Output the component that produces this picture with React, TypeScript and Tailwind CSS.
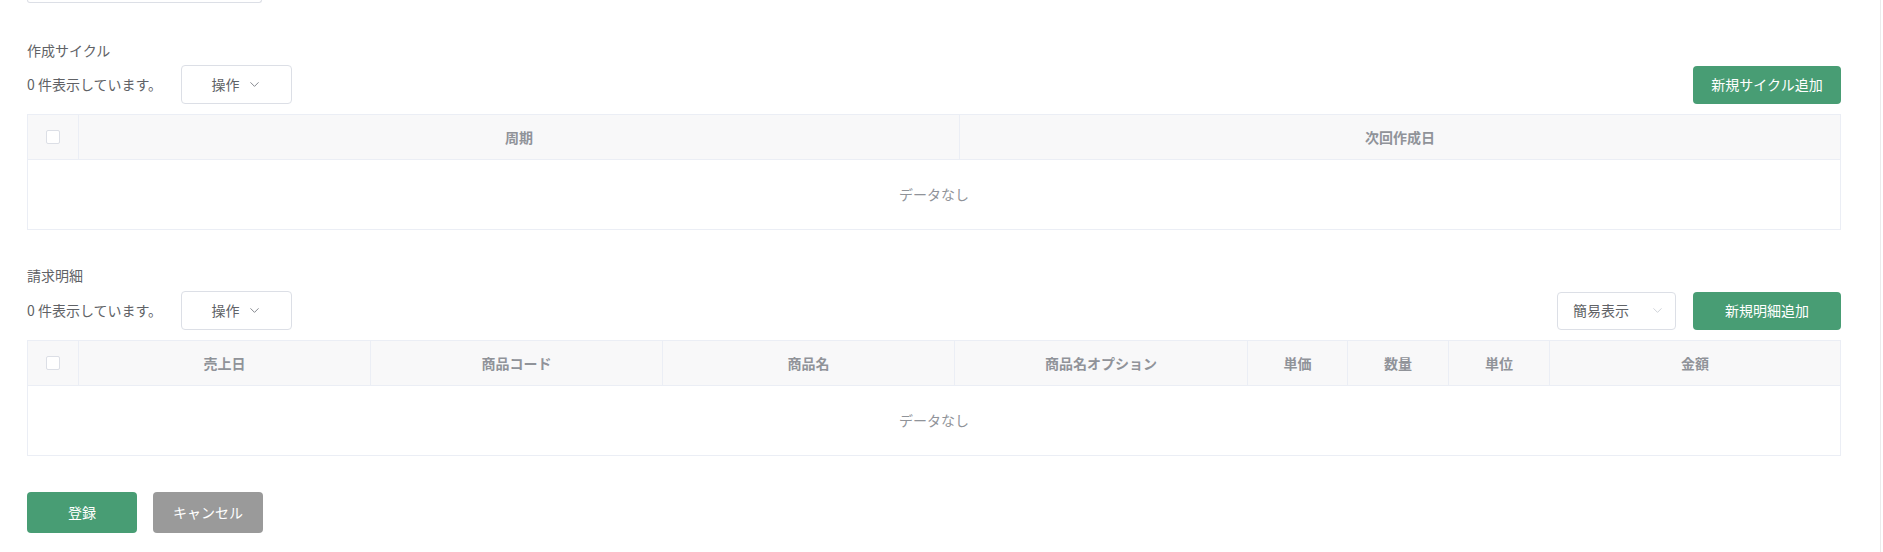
import { ChevronDown } from "lucide-react";

const detailCols = [
  { label: "売上日", w: "w-[292px]" },
  { label: "商品コード", w: "w-[292px]" },
  { label: "商品名", w: "w-[292px]" },
  { label: "商品名オプション", w: "w-[293px]" },
  { label: "単価", w: "w-[100px]" },
  { label: "数量", w: "w-[101px]" },
  { label: "単位", w: "w-[101px]" },
  { label: "金額", w: "" },
];

function Checkbox() {
  return <span className="mx-auto block h-[14px] w-[14px] rounded-[2px] border border-[#dcdfe6] bg-white" />;
}

function Toolbar({ right }: { right: React.ReactNode }) {
  return (
    <div className="flex h-[39px] items-center">
      <span className="text-[14px] text-[#606266]">0 件表示しています。</span>
      <button className="ml-[19px] flex h-[39px] w-[111px] items-center justify-center gap-[7px] rounded-[4px] border border-[#dcdfe6] bg-white text-[14px] text-[#606266]">
        操作
        <ChevronDown size={15} strokeWidth={1.5} className="text-[#7d8088]" />
      </button>
      <div className="ml-auto flex items-center gap-[17px]">{right}</div>
    </div>
  );
}

function GreenButton({ children }: { children: React.ReactNode }) {
  return (
    <button className="h-[38px] w-[148px] rounded-[4px] bg-[#489d74] text-[14px] text-white">
      {children}
    </button>
  );
}

function EmptyRow({ span }: { span: number }) {
  return (
    <tr>
      <td colSpan={span} className="h-[70px] text-center text-[14px] text-[#909399]">
        データなし
      </td>
    </tr>
  );
}

export default function App() {
  return (
    <div className="flex h-[552px] bg-white font-['Noto_Sans_CJK_JP',sans-serif]">
      <div className="flex-1 pl-[27px] pr-[39px]">
        <div className="h-[3px] w-[235px] rounded-b-[4px] border border-t-0 border-[#dcdfe6]" />

        {/* 作成サイクル */}
        <div className="mt-[37px] text-[14px] leading-[20px] text-[#606266]">作成サイクル</div>
        <div className="mt-[5px]">
          <Toolbar right={<GreenButton>新規サイクル追加</GreenButton>} />
        </div>
        <table className="mt-[10px] w-full table-fixed border-collapse border border-[#ebeef5]">
          <colgroup>
            <col className="w-[51px]" />
            <col />
            <col />
          </colgroup>
          <thead>
            <tr className="h-[45px] bg-[#f8f8f9] text-[14px] font-bold text-[#909399]">
              <th className="border border-[#ebeef5]">
                <Checkbox />
              </th>
              <th className="border border-[#ebeef5]">周期</th>
              <th className="border border-[#ebeef5]">次回作成日</th>
            </tr>
          </thead>
          <tbody>
            <EmptyRow span={3} />
          </tbody>
        </table>

        {/* 請求明細 */}
        <div className="mt-[35px] text-[14px] leading-[20px] text-[#606266]">請求明細</div>
        <div className="mt-[6px]">
          <Toolbar
            right={
              <>
                <div className="flex h-[38px] w-[119px] items-center justify-between rounded-[4px] border border-[#dcdfe6] bg-white pl-[15px] pr-[10px] text-[14px] text-[#606266]">
                  簡易表示
                  <ChevronDown size={15} strokeWidth={1.2} className="text-[#c0c4cc]" />
                </div>
                <GreenButton>新規明細追加</GreenButton>
              </>
            }
          />
        </div>
        <table className="mt-[10px] w-full table-fixed border-collapse border border-[#ebeef5]">
          <colgroup>
            <col className="w-[51px]" />
            {detailCols.map((c) => (
              <col key={c.label} className={c.w} />
            ))}
          </colgroup>
          <thead>
            <tr className="h-[45px] bg-[#f8f8f9] text-[14px] font-bold text-[#909399]">
              <th className="border border-[#ebeef5]">
                <Checkbox />
              </th>
              {detailCols.map((c) => (
                <th key={c.label} className="border border-[#ebeef5]">
                  {c.label}
                </th>
              ))}
            </tr>
          </thead>
          <tbody>
            <EmptyRow span={9} />
          </tbody>
        </table>

        <div className="mt-[36px] flex gap-[16px]">
          <button className="h-[41px] w-[110px] rounded-[4px] bg-[#489d74] text-[14px] text-white">登録</button>
          <button className="h-[41px] w-[110px] rounded-[4px] bg-[#9a9a9a] text-[14px] text-white">キャンセル</button>
        </div>
      </div>
      <div className="w-[3px] border-l border-[#ebebeb]" />
    </div>
  );
}
